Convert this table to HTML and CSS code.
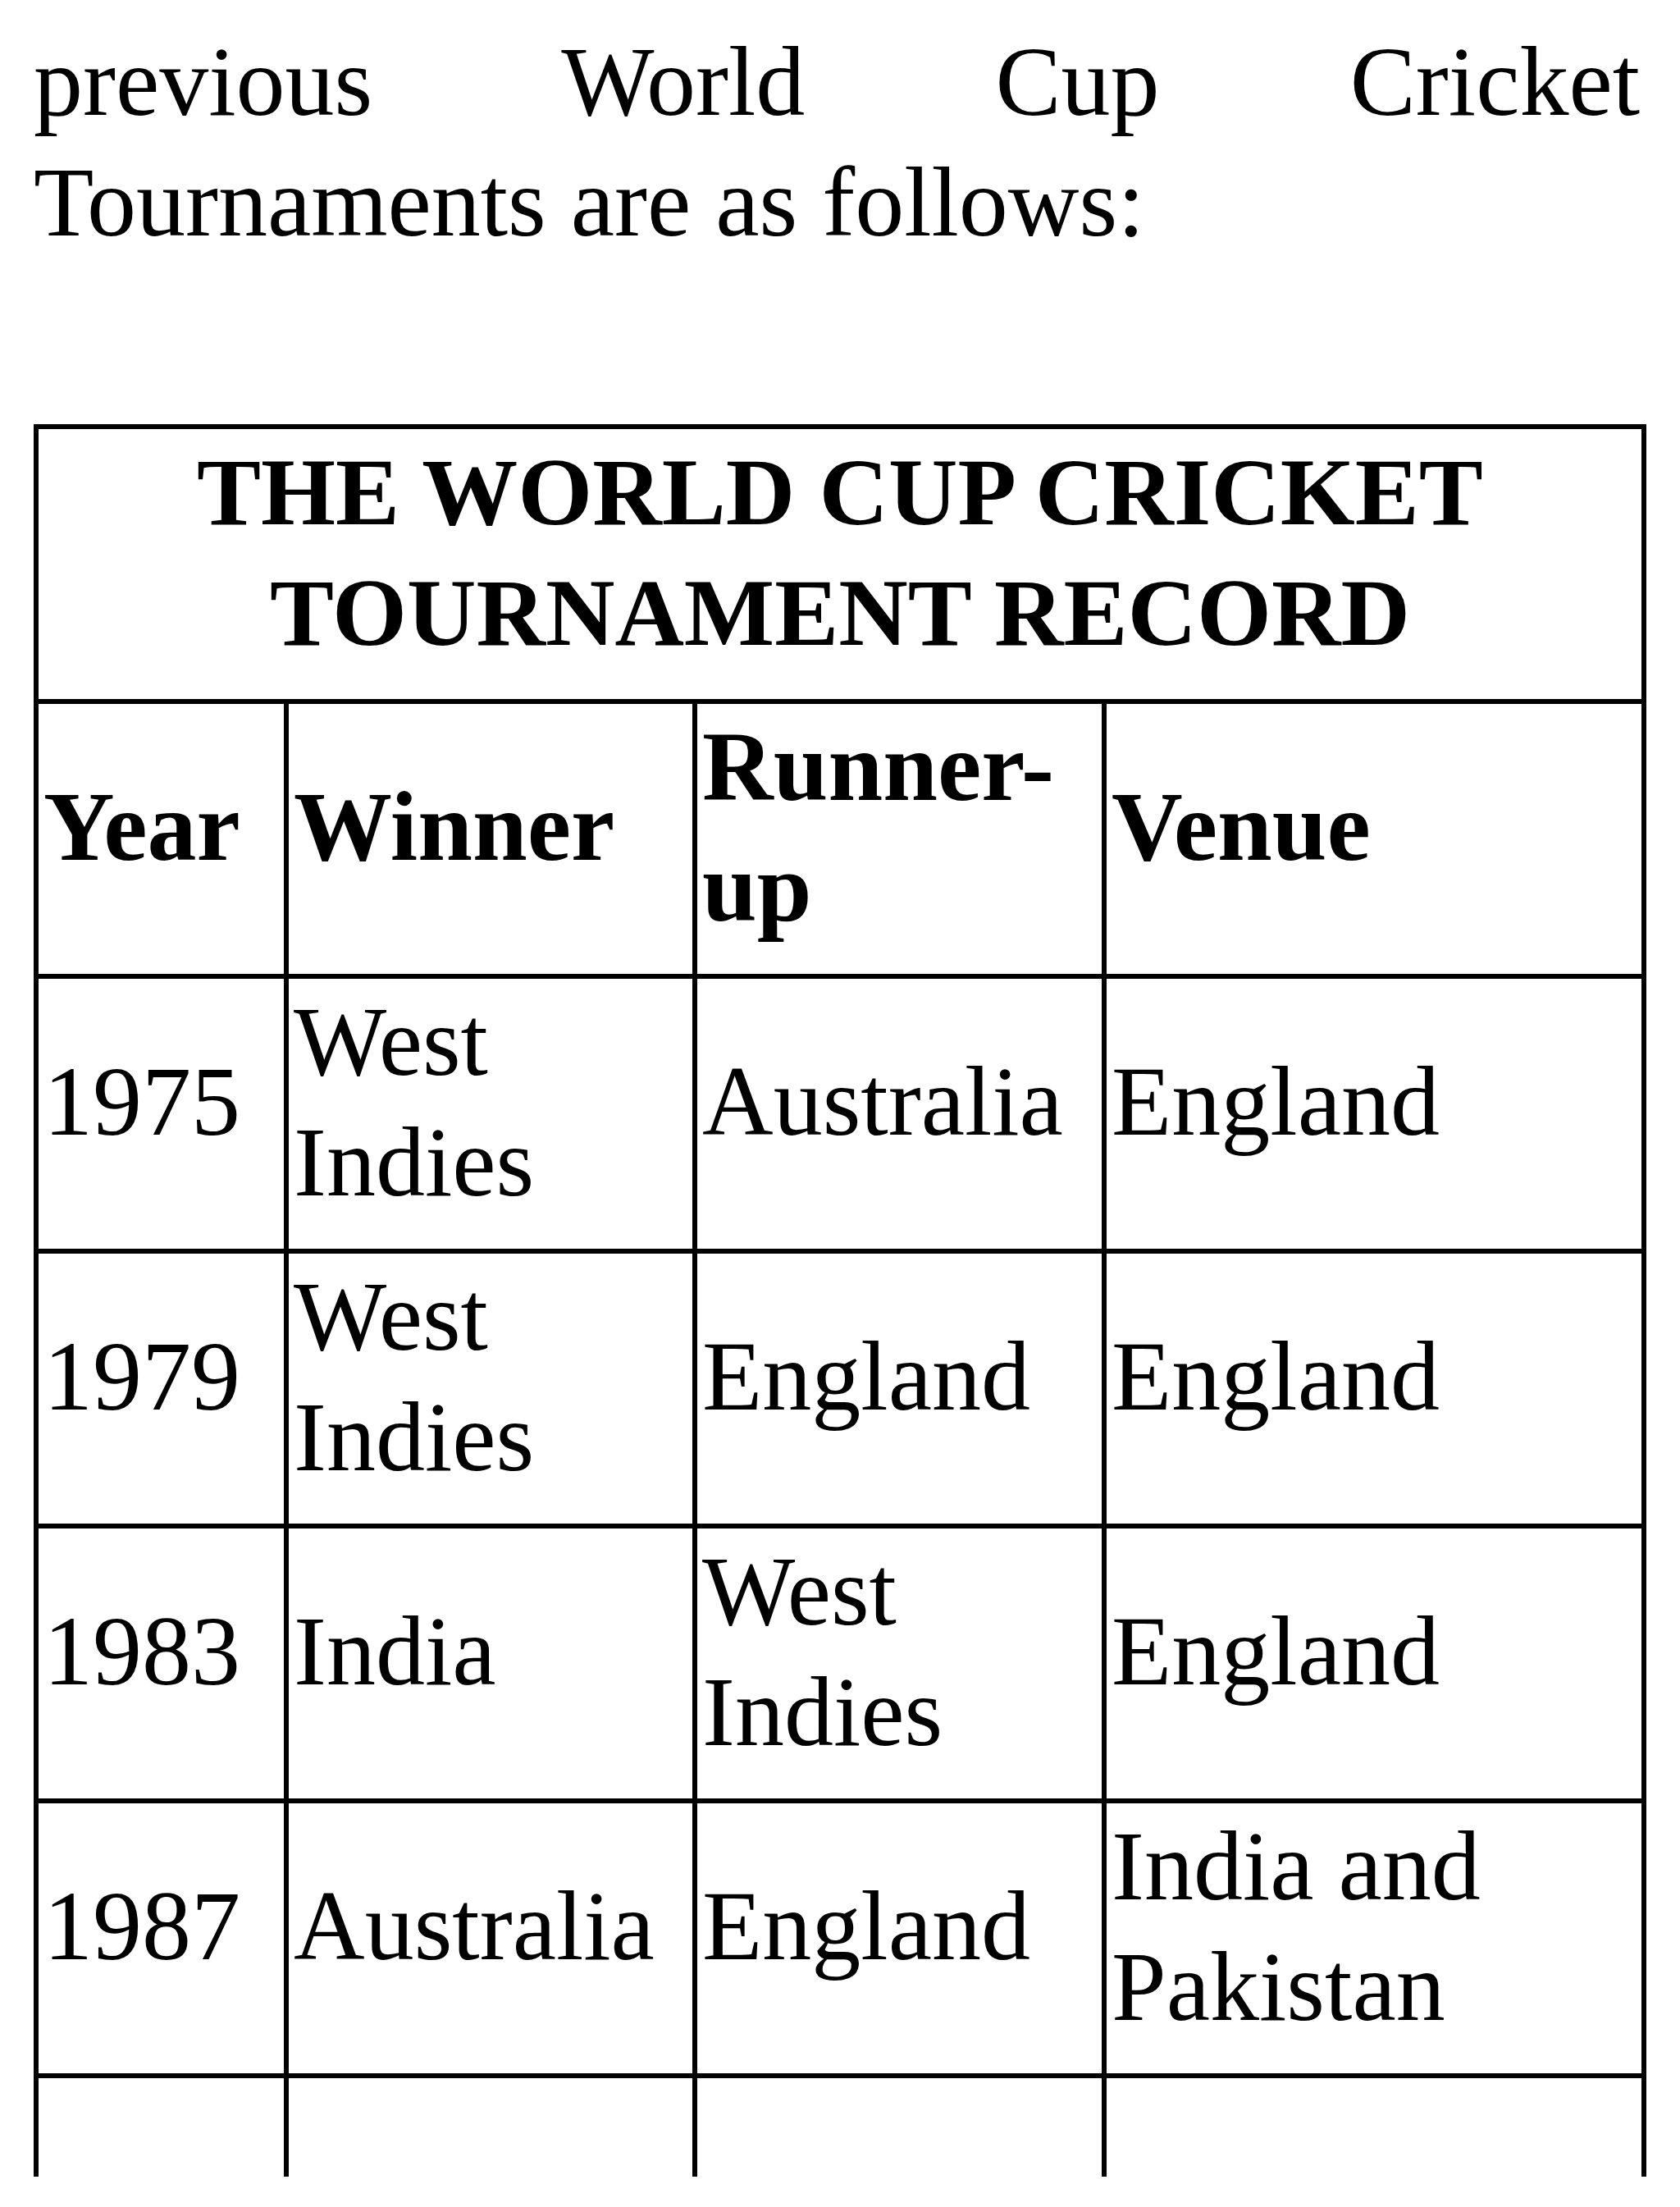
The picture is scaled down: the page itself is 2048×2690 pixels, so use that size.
FILE: index.html
```html
<!DOCTYPE html>
<html lang="en">
<head>
<meta charset="utf-8">
<title>The World Cup Cricket Tournament Record</title>
<link rel="stylesheet" href="styles.css">
</head>
<body>
<div class="page">
  <p class="intro">previous World Cup Cricket Tournaments are as follows:</p>
  <div class="record" role="table">
    <div class="cell title" role="row">THE WORLD CUP CRICKET TOURNAMENT RECORD</div>

    <div class="cell head" role="columnheader">Year</div>
    <div class="cell head" role="columnheader">Winner</div>
    <div class="cell head" role="columnheader">Runner-up</div>
    <div class="cell head" role="columnheader">Venue</div>

    <div class="cell" role="cell">1975</div>
    <div class="cell" role="cell">West Indies</div>
    <div class="cell" role="cell">Australia</div>
    <div class="cell" role="cell">England</div>

    <div class="cell" role="cell">1979</div>
    <div class="cell" role="cell">West Indies</div>
    <div class="cell" role="cell">England</div>
    <div class="cell" role="cell">England</div>

    <div class="cell" role="cell">1983</div>
    <div class="cell" role="cell">India</div>
    <div class="cell" role="cell">West Indies</div>
    <div class="cell" role="cell">England</div>

    <div class="cell" role="cell">1987</div>
    <div class="cell" role="cell">Australia</div>
    <div class="cell" role="cell">England</div>
    <div class="cell" role="cell">India and Pakistan</div>

    <div class="cell" role="cell"></div>
    <div class="cell" role="cell"></div>
    <div class="cell" role="cell"></div>
    <div class="cell" role="cell"></div>
  </div>
</div>
</body>
</html>
```

FILE: styles.css
```css
html, body {
  margin: 0;
  padding: 0;
  background: #ffffff;
}

body {
  font-family: "Liberation Serif", "Times New Roman", serif;
  font-size: 120px;
  line-height: 147px;
  color: #000000;
}

.page {
  padding: 26px 41px 0 41px;
}

.intro {
  margin: 0 8px 0 0;
  text-align: justify;
}

.record {
  margin-top: 197px;
  display: grid;
  grid-template-columns: 299px 492px 493px 652px;
  grid-template-rows: repeat(6, 329px) 120px;
  gap: 6px;
  padding: 6px 6px 0 6px;
  background: #000000;
  width: max-content;
}

.cell {
  background: #ffffff;
  display: flex;
  align-items: center;
  padding: 0 6px 30px 6px;
  box-sizing: border-box;
}

.title {
  grid-column: 1 / -1;
  justify-content: center;
  text-align: center;
  font-weight: bold;
  font-size: 117px;
}

.head {
  font-weight: bold;
}
```
